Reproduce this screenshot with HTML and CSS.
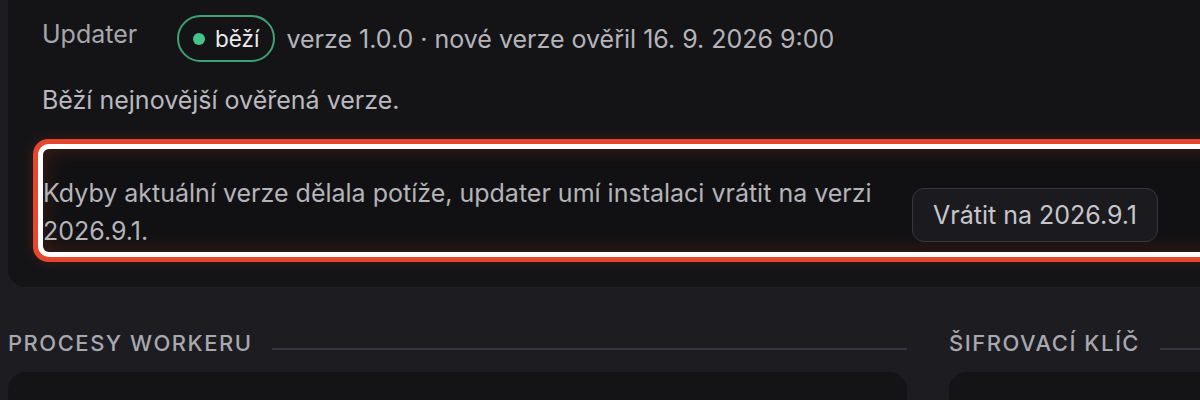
FILE: index.html
```html
<!DOCTYPE html>
<html lang="cs">
<head>
<meta charset="utf-8">
<title>Updater</title>
<link rel="stylesheet" href="styles.css">
</head>
<body>
<div class="page">
  <section class="card">
    <div class="status-row">
      <div class="label">Updater</div>
      <div class="status-info">
        <span class="badge"><span class="dot"></span>běží</span>
        <span class="meta">verze 1.0.0 · nové verze ověřil 16. 9. 2026 9:00</span>
      </div>
    </div>
    <p class="summary">Běží nejnovější ověřená verze.</p>
    <div class="rollback">
      <p class="rollback-text">Kdyby aktuální verze dělala potíže, updater umí instalaci vrátit na verzi 2026.9.1.</p>
      <button class="btn">Vrátit na 2026.9.1</button>
    </div>
  </section>
  <div class="columns">
    <div class="col col-main">
      <h2 class="section-title"><span>Procesy workeru</span></h2>
      <div class="panel"></div>
    </div>
    <div class="col col-side">
      <h2 class="section-title"><span>Šifrovací klíč</span></h2>
      <div class="panel"></div>
    </div>
  </div>
</div>
</body>
</html>
```

FILE: styles.css
```css
html, body {
  margin: 0;
  padding: 0;
  background: #1c1c21;
  overflow: hidden;
}
body {
  font-family: Inter, "Noto Sans", "Liberation Sans", sans-serif;
  color: #b9b9bf;
  width: 1200px;
  height: 400px;
}
.page {
  width: 1500px;
  padding-left: 8px;
}
.card {
  background: #141417;
  border-radius: 0 0 18px 18px;
  margin-top: -20px;
  padding: 35px 0 35px 34px;
}
.status-row {
  display: flex;
  align-items: flex-start;
}
.label {
  width: 135px;
  font-size: 25px;
  line-height: 36px;
  color: #a6a6ad;
  padding-top: 1px;
}
.status-info {
  display: flex;
  align-items: center;
  gap: 11px;
}
.badge {
  box-sizing: border-box;
  display: inline-flex;
  align-items: center;
  gap: 10px;
  height: 47px;
  padding: 0 14px 0 14px;
  border: 2px solid #3f9f76;
  border-radius: 999px;
  color: #ececee;
  font-size: 22.5px;
}
.dot {
  width: 12px;
  height: 12px;
  border-radius: 50%;
  background: #43c48c;
}
.meta {
  font-size: 25px;
  color: #b4b4ba;
}
.summary {
  margin: 20px 0 0;
  font-size: 25px;
  line-height: 36px;
  color: #b9b9bf;
}
.rollback {
  box-sizing: border-box;
  height: 103px;
  margin-top: 31px;
  margin-left: 1px;
  display: flex;
  align-items: center;
  gap: 21px;
  padding: 26px 0 2px;
  border-radius: 6px;
  background: #111113;
  box-shadow: 0 0 0 5px #ffffff, 0 0 0 10px #e4472b, 0 0 14px 10px rgba(228, 71, 43, 0.18), inset 0 0 22px rgba(228, 71, 43, 0.22);
}
.rollback-text {
  margin: 0;
  width: 848px;
  flex: none;
  font-size: 25px;
  line-height: 37.5px;
  color: #b4b4ba;
}
.btn {
  flex: none;
  box-sizing: border-box;
  font-family: inherit;
  font-size: 25px;
  color: #c6c6cb;
  background: #1b1b1f;
  border: 1.5px solid #37373d;
  border-radius: 12px;
  height: 54px;
  padding: 0 20px;
  margin-top: 5px;
}
.columns {
  display: grid;
  grid-template-columns: 899px 400px;
  column-gap: 42px;
  margin-top: 41px;
}
.section-title {
  display: flex;
  align-items: center;
  gap: 20px;
  margin: 0;
  font-size: 22px;
  font-weight: 500;
  letter-spacing: 1.5px;
  text-transform: uppercase;
  color: #a8a8af;
  line-height: 30px;
}
.section-title::after {
  content: "";
  flex: 1;
  height: 2px;
  margin-top: 12px;
  background: #35353b;
}
.panel {
  margin-top: 14px;
  height: 80px;
  background: #141417;
  border-radius: 18px;
}
```
